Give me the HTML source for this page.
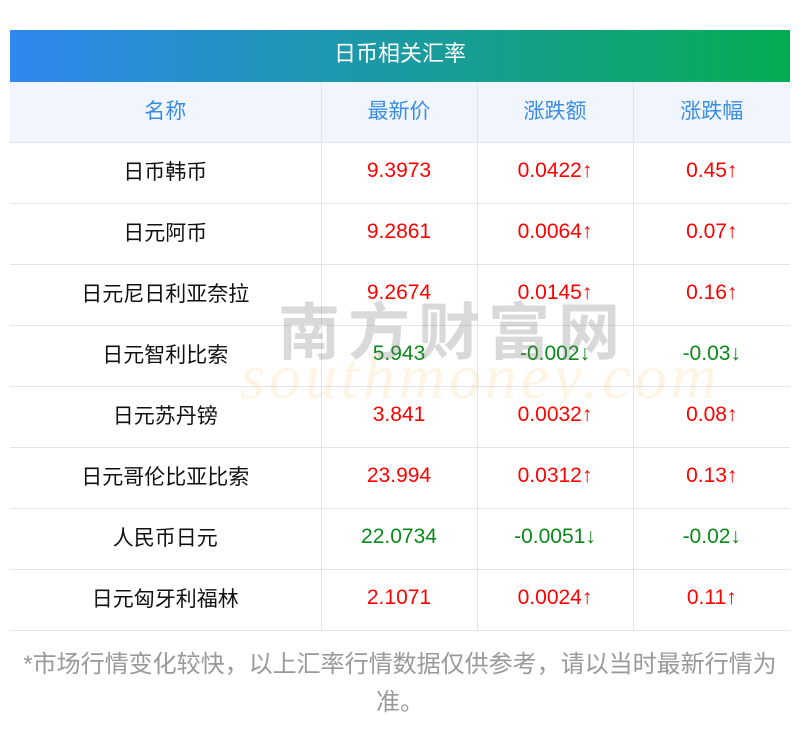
<!DOCTYPE html>
<html><head><meta charset="utf-8"><style>
body{margin:0;width:800px;height:733px;background:#fff;font-family:"Liberation Sans","Noto Sans CJK SC",sans-serif;position:relative;overflow:hidden}
.title{position:absolute;left:10px;top:30px;width:780px;height:52px;background:linear-gradient(90deg,#2f88f0,#05ad52);color:#fff;font-size:22px;text-align:center;line-height:48px}
table{position:absolute;left:10px;top:82px;width:780px;border-collapse:collapse;table-layout:fixed}
td,th{height:61px;border-bottom:1px solid #e1e4ee;border-right:1px solid #e1e4ee;text-align:center;font-size:21px;font-weight:normal;padding:0 0 4px 0;box-sizing:border-box}
td:last-child,th:last-child{border-right:none}
th{background:#f1f6fe;color:#3b8de4;height:60px}
td:first-child{color:#111}
.r{color:#f00}.g{color:#0a8a1a}
.wm{position:absolute;left:278px;top:282px;font-size:62px;color:rgba(120,120,120,.28);letter-spacing:8px;font-weight:bold}
.wm2{position:absolute;left:240px;top:340px;font-size:64px;font-style:italic;font-family:"Liberation Serif",serif;color:rgba(250,200,120,.2);letter-spacing:4px}
.foot{position:absolute;left:0;top:646px;width:800px;text-align:center;color:#999;font-size:24px;line-height:38px}
</style></head><body>
<div class="title">日币相关汇率</div>
<table>
<colgroup><col style="width:311px"><col style="width:156px"><col style="width:156px"><col style="width:157px"></colgroup>
<tr><th>名称</th><th>最新价</th><th>涨跌额</th><th>涨跌幅</th></tr>
<tr><td>日币韩币</td><td class="r">9.3973</td><td class="r">0.0422↑</td><td class="r">0.45↑</td></tr>
<tr><td>日元阿币</td><td class="r">9.2861</td><td class="r">0.0064↑</td><td class="r">0.07↑</td></tr>
<tr><td>日元尼日利亚奈拉</td><td class="r">9.2674</td><td class="r">0.0145↑</td><td class="r">0.16↑</td></tr>
<tr><td>日元智利比索</td><td class="g">5.943</td><td class="g">-0.002↓</td><td class="g">-0.03↓</td></tr>
<tr><td>日元苏丹镑</td><td class="r">3.841</td><td class="r">0.0032↑</td><td class="r">0.08↑</td></tr>
<tr><td>日元哥伦比亚比索</td><td class="r">23.994</td><td class="r">0.0312↑</td><td class="r">0.13↑</td></tr>
<tr><td>人民币日元</td><td class="g">22.0734</td><td class="g">-0.0051↓</td><td class="g">-0.02↓</td></tr>
<tr><td>日元匈牙利福林</td><td class="r">2.1071</td><td class="r">0.0024↑</td><td class="r">0.11↑</td></tr>
</table>
<div class="wm">南方财富网</div>
<div class="wm2">southmoney.com</div>
<div class="foot">*市场行情变化较快，以上汇率行情数据仅供参考，请以当时最新行情为<br>准。</div>
</body></html>
